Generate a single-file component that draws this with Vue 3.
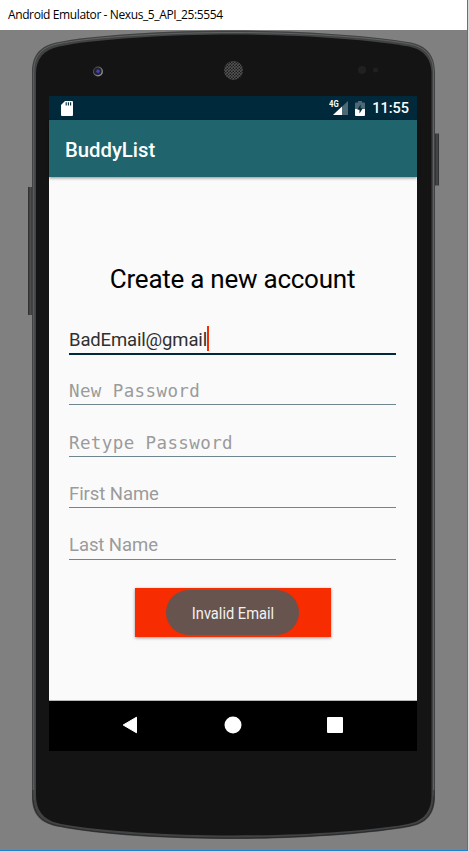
<script setup>
const fields = [
  { hint: 'New Password', kind: 'mono first' },
  { hint: 'Retype Password', kind: 'mono' },
  { hint: 'First Name', kind: 'plain' },
  { hint: 'Last Name', kind: 'plain' },
]
</script>

<template>
  <div class="window">
    <header class="titlebar">Android Emulator - Nexus_5_API_25:5554</header>
    <main class="desk">
      <svg class="shell" width="467" height="820" viewBox="0 30 467 820" aria-hidden="true">
        <defs>
          <linearGradient id="key" x1="0" x2="1" y1="0" y2="0">
            <stop offset="0" stop-color="#2b2b2b" />
            <stop offset="0.5" stop-color="#4d4d4d" />
            <stop offset="1" stop-color="#2a2a2a" />
          </linearGradient>
          <pattern id="mesh" width="3" height="3" patternUnits="userSpaceOnUse">
            <rect width="3" height="3" fill="#555" />
            <circle cx="0.8" cy="0.8" r="0.8" fill="#181818" />
            <circle cx="2.3" cy="2.3" r="0.8" fill="#181818" />
          </pattern>
          <linearGradient id="lens" x1="0" x2="1" y1="0" y2="1">
            <stop offset="0" stop-color="#3c3c3c" />
            <stop offset="1" stop-color="#a0a0a0" />
          </linearGradient>
        </defs>
        <rect x="28" y="187" width="5" height="128" fill="url(#key)" />
        <rect x="435" y="133.500" width="4" height="52" fill="url(#key)" />
        <path fill="#414243" d="M32 72C32 54 41 46 56 42.500C92 35 166 30.500 234 30.500C302 30.500 372 35.500 411 42.500C426 45.500 435 55 435 72V796C435 815 426 824 409 827C370 834 300 839 234 839C167 839 100 835 60 827C42 824 32 816 32 797Z" />
        <path fill="none" stroke="#68696a" stroke-width="0.8" d="M33.700 800V72C33.700 55 42 47.500 57 44C94 36.500 167 32.500 234 32.500C301 32.500 371 37 410 44C425 47 433.500 56 433.500 72V796" />
        <path fill="none" stroke="#292a2b" stroke-width="1" d="M33 790V797C33 815 43 823 60 826C100 834 167 838 234 838C300 838 370 833 409 826C425 823 434 814 434 796V790" />
        <path fill="#141414" d="M36 74C36 58 44 50 59 46.500C95 39 168 34.500 234 34.500C300 34.500 370 39.500 409 46.500C423 49.500 431.500 58 431.500 74V795C431.500 812 423 821 408 824C369 831 300 835.500 234 835.500C168 835.500 100 831 61 824C45 821 36 812 36 795Z" />
        <circle cx="98" cy="71.500" r="5" fill="url(#lens)" />
        <circle cx="97.700" cy="71.200" r="3.800" fill="#23222f" />
        <circle cx="98" cy="71.300" r="1.700" fill="#4743b5" />
        <circle cx="233.500" cy="70.500" r="9.500" fill="url(#mesh)" />
        <circle cx="362" cy="70" r="4" fill="#202020" />
        <circle cx="375.500" cy="70" r="2.500" fill="#202020" />
      </svg>

      <section class="screen">
        <div class="status">
          <svg class="sd" width="12" height="15" viewBox="0 0 12 15">
            <path fill="#fff" d="M4 0H11Q12 0 12 1V14Q12 15 11 15H1Q0 15 0 14V4Z" />
            <path stroke="#00293b" stroke-width="1.100" d="M5.200 1.300V4.500M7.400 1.300V4.500M9.600 1.300V4.500" />
          </svg>
          <div class="signal">
            <span class="net">4G</span>
            <svg width="15" height="14" viewBox="0 0 15 14">
              <path fill="#4d6976" d="M15 0V14H0Z" />
              <path fill="#fff" d="M9 5.600V14H0Z" />
            </svg>
          </div>
          <svg class="battery" width="10" height="15" viewBox="0 0 10 15">
            <path fill="#4d6976" d="M3 0H7V1.500H9Q10 1.500 10 2.500V8H0V2.500Q0 1.500 1 1.500H3Z" />
            <path fill="#fff" d="M0 8H10V14Q10 15 9 15H1Q0 15 0 14Z" />
            <path fill="#00293b" d="M5.600 3.500L2.300 8.800H4.500V12.500L7.800 7.200H5.600Z" />
          </svg>
          <time class="clock">11:55</time>
        </div>
        <div class="appbar">BuddyList</div>
        <form class="form" @submit.prevent>
          <h1>Create a new account</h1>
          <div class="field active"><span class="value">BadEmail@gmail</span><i class="caret"></i></div>
          <div v-for="f in fields" :key="f.hint" class="field" :class="f.kind">
            <span>{{ f.hint }}</span>
          </div>
          <div class="submit"><div class="toast"><span>Invalid Email</span></div></div>
        </form>
        <nav class="nav">
          <svg width="16" height="18" viewBox="0 0 16 18"><path fill="#fff" stroke="#fff" stroke-linejoin="round" d="M1.200 9L14.500 1.200V16.800Z" /></svg>
          <svg width="18" height="18" viewBox="0 0 18 18"><circle cx="9" cy="9" r="8.500" fill="#fff" /></svg>
          <svg width="16" height="16" viewBox="0 0 16 16"><rect width="16" height="16" rx="1" fill="#fff" /></svg>
        </nav>
      </section>
    </main>
  </div>
</template>

<style>
body {
  background: #dcdcdc;
  overflow: hidden;
}
</style>

<style scoped>
.window {
  box-sizing: border-box;
  width: 468px;
  height: 851px;
  border-right: 1px solid #1883d7;
  border-bottom: 1px solid #1883d7;
  font-family: Roboto, sans-serif;
}
.titlebar {
  height: 30px;
  padding-left: 8px;
  background: #fff;
  color: #000;
  font: 12px/30px "Open Sans", sans-serif;
  letter-spacing: -0.39px;
  white-space: nowrap;
}
.desk {
  position: relative;
  box-sizing: border-box;
  height: 820px;
  padding: 66px 50px 0 49px;
  background: #808080;
}
.shell {
  position: absolute;
  inset: 0;
}
.screen {
  position: relative;
  display: flex;
  flex-direction: column;
  width: 368px;
  height: 655px;
  background: #fafafa;
}
.status {
  display: flex;
  align-items: center;
  flex: 0 0 24px;
  padding: 0 8px 0 12px;
  background: #00293b;
  color: #fff;
}
.signal {
  position: relative;
  display: flex;
  margin: 0 7px 0 auto;
}
.net {
  position: absolute;
  left: -4px;
  top: -1px;
  font: bold 9px/9px Roboto, sans-serif;
  transform: scaleX(0.85);
  transform-origin: left;
}
.clock {
  margin-left: 7px;
  padding-top: 1px;
  font-size: 14.500px;
  font-weight: 500;
  line-height: 23px;
}
.appbar {
  box-sizing: border-box;
  height: 57px;
  padding: 3px 0 0 16px;
  background: #20656d;
  color: #fff;
  font-size: 20.300px;
  font-weight: 500;
  line-height: 54px;
  box-shadow: 0 1px 3px rgba(0, 0, 0, 0.45);
}
.form {
  display: flex;
  flex: 1;
  flex-direction: column;
  padding: 83px 21px 0 20px;
  border-bottom: 1px solid #b8b8b8;
}
h1 {
  margin: 0 0 23px;
  color: #000;
  font-size: 26px;
  font-weight: 400;
  letter-spacing: -0.25px;
  line-height: 38px;
  text-align: center;
  white-space: nowrap;
}
.field {
  box-sizing: border-box;
  display: flex;
  align-items: flex-start;
  height: 51.500px;
  padding-top: 25px;
  border-bottom: 1px solid #6f858f;
  color: #9b9b9b;
  font-size: 18.500px;
  letter-spacing: -0.07px;
  line-height: 24px;
}
.field.active {
  height: 34px;
  padding-top: 7px;
  border-bottom: 2px solid #00293b;
  color: #303030;
  letter-spacing: -0.15px;
}
.field.mono {
  padding-top: 25.500px;
  font-family: "DejaVu Sans Mono", monospace;
  font-size: 17.500px;
  letter-spacing: 0.400px;
}
.field.first {
  height: 50px;
  padding-top: 24px;
}
.caret {
  width: 2px;
  height: 25px;
  margin-top: -2px;
  background: #f72c00;
}
.submit {
  display: flex;
  align-items: center;
  justify-content: center;
  align-self: center;
  width: 196px;
  height: 49px;
  margin-top: 28.500px;
  background: #f72c00;
  box-shadow: 0 1px 3px rgba(0, 0, 0, 0.4);
}
.toast {
  display: flex;
  justify-content: center;
  width: 133px;
  height: 45px;
  border-radius: 23px;
  background: #67544f;
  color: #f3f1f1;
  font-size: 16px;
  line-height: 47px;
}
.toast span {
  transform: scaleX(0.915);
}
.nav {
  display: flex;
  align-items: center;
  justify-content: space-between;
  flex: 0 0 50px;
  box-sizing: border-box;
  padding: 0 74px 2px 73px;
  background: #000;
}
</style>
